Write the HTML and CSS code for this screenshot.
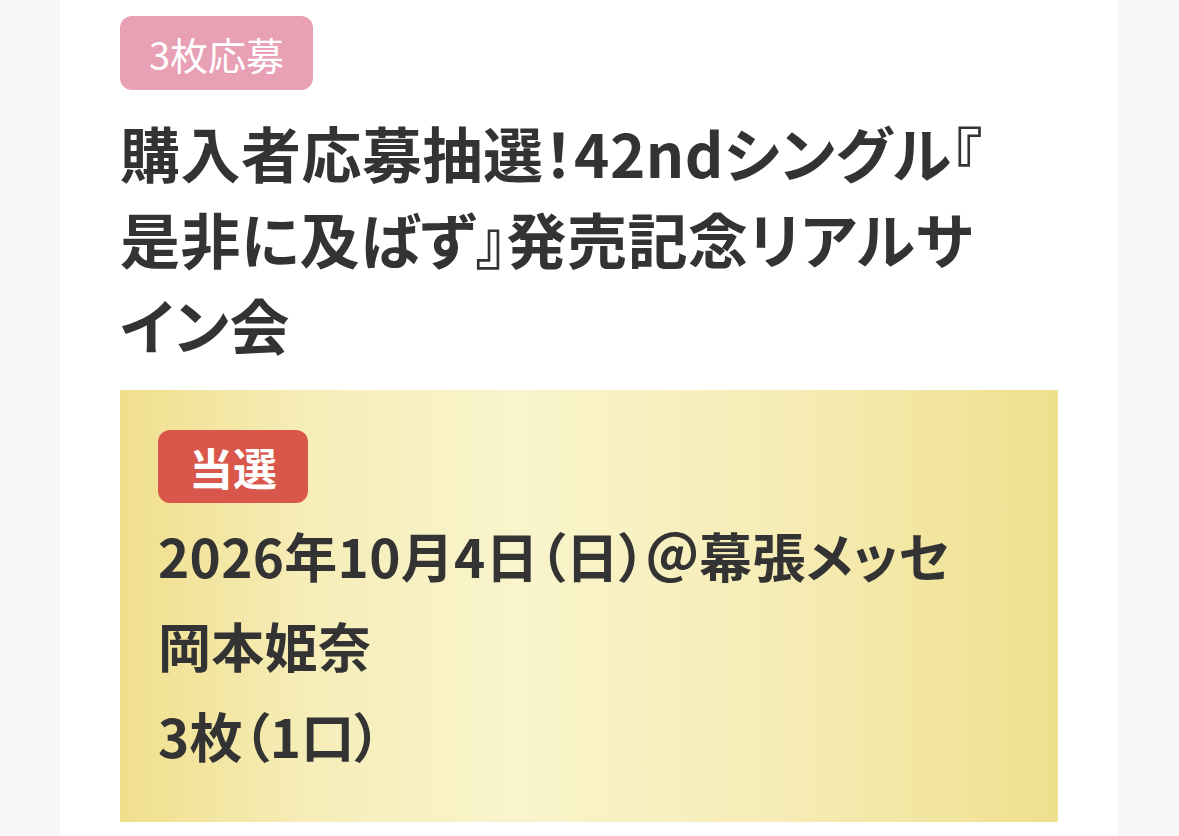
FILE: index.html
```html
<!DOCTYPE html>
<html lang="ja">
<head>
<meta charset="utf-8">
<link rel="stylesheet" href="styles.css">
</head>
<body>
<div class="page">
  <main class="panel">
    <span class="tag">3枚応募</span>
    <h1 class="title">購入者応募抽選！42ndシングル『<br>是非に及ばず』発売記念リアルサ<br>イン会</h1>
    <section class="result">
      <span class="win">当選</span>
      <p class="line">2026年10月4日（日）＠幕張メッセ</p>
      <p class="line">岡本姫奈</p>
      <p class="line">3枚（1口）</p>
    </section>
  </main>
</div>
</body>
</html>
```
FILE: styles.css
```css
html, body {
  margin: 0;
  padding: 0;
  background: #f7f7f7;
}
body {
  font-family: "Noto Sans CJK JP", "Noto Sans", sans-serif;
  color: #333333;
}
.page {
  display: flex;
  padding-left: 60px;
  width: 1179px;
  box-sizing: border-box;
}
.panel {
  width: 1058px;
  background: #ffffff;
  padding: 16px 60px 14px 60px;
  box-sizing: border-box;
  display: flex;
  flex-direction: column;
  align-items: flex-start;
  min-height: 836px;
}
.tag {
  display: inline-flex;
  align-items: center;
  justify-content: center;
  height: 74px;
  padding: 0 29px;
  border-radius: 12px;
  background: #e8a0b4;
  color: #ffffff;
  font-size: 38px;
  font-weight: 400;
}
.title {
  margin: 19px 0 0 0;
  font-size: 60px;
  line-height: 86px;
  font-weight: 700;
  font-feature-settings: "palt";
  letter-spacing: 0.5px;
  width: 938px;
}
.result {
  margin-top: 23px;
  width: 938px;
  box-sizing: border-box;
  padding: 40px 38px 42px 38px;
  background: linear-gradient(90deg, #f0df8c 0%, #f6edb8 20%, #f9f4cc 42%, #f6ecb6 70%, #efe08e 100%);
  display: flex;
  flex-direction: column;
  align-items: flex-start;
}
.win {
  display: inline-flex;
  align-items: center;
  justify-content: center;
  height: 73px;
  padding: 0 31px;
  border-radius: 12px;
  background: #d9574a;
  color: #ffffff;
  font-size: 44px;
  font-weight: 700;
  margin-bottom: 7px;
}
.line {
  margin: 0;
  font-size: 53px;
  line-height: 90px;
  font-weight: 700;
  font-feature-settings: "palt";
  letter-spacing: 0.3px;
}
```
